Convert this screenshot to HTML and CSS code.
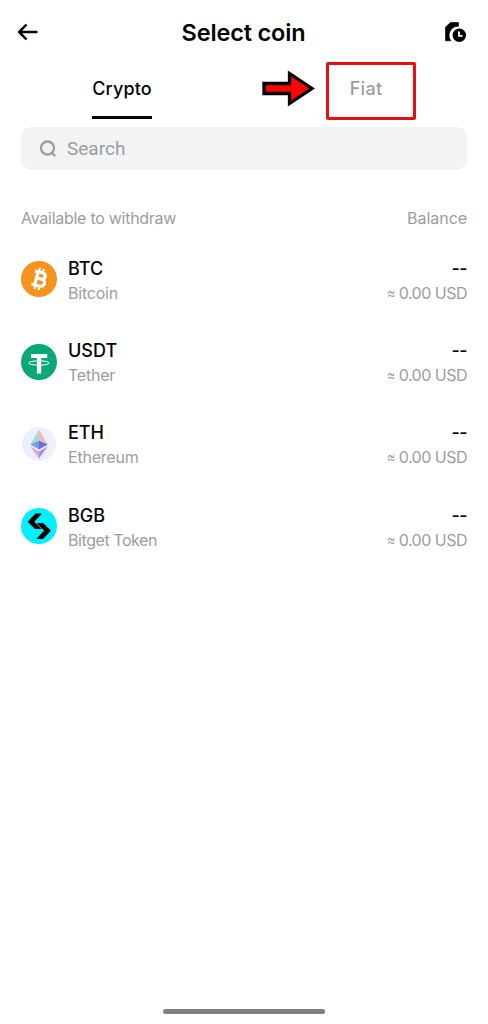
FILE: index.html
```html
<!DOCTYPE html>
<html lang="en">
<head>
<meta charset="utf-8">
<title>Select coin</title>
<link rel="stylesheet" href="styles.css">
</head>
<body>
<main class="screen">
  <header class="topbar">
    <svg class="back" width="22" height="20" viewBox="0 0 22 20"><path d="M9.500 2.500 2.200 10 9.500 17.500M2.200 10H20.500" fill="none" stroke="#000" stroke-width="2.500"/></svg>
    <h1 class="title">Select coin</h1>
    <svg class="history" width="24" height="24" viewBox="0 0 24 24"><path d="M6.500 2.500H14.500V6.300A9 9 0 0 0 7 20.800H1.500V7Z" stroke="#000" stroke-width=".6" stroke-linejoin="round"/><circle cx="15.300" cy="15.300" r="6.700"/><path d="M15 11.500v4.300h3.500" fill="none" stroke="#fff" stroke-width="1.800"/></svg>
  </header>
  <nav class="tabs">
    <div class="tab"><span class="tab-label active">Crypto</span></div>
    <div class="tab"><span class="tab-label fiat">Fiat</span>
      <svg class="pointer" width="56" height="40" viewBox="0 0 56 40"><path d="M4 15.500H29.500V5.500L52 20.500 29.500 35.500V25.500H4Z" fill="#f80505" stroke="#000" stroke-width="3.300"/></svg>
      <div class="highlight"></div>
    </div>
  </nav>
  <div class="search">
    <svg width="18" height="18" viewBox="0 0 18 18"><circle cx="8.500" cy="8" r="6.500" fill="none" stroke="#9b9da1" stroke-width="2.300"/><path d="m12.500 12.200 3.800 4" stroke="#9b9da1" stroke-width="2.300"/></svg>
    <span class="search-text">Search</span>
  </div>
  <div class="columns"><span class="available">Available to withdraw</span><span class="balance">Balance</span></div>
  <section class="coins">
    <div class="coin">
      <svg class="logo" viewBox="0 0 36 36"><circle cx="18" cy="18" r="18" fill="#f7931a"/><g transform="rotate(14 18 18)" fill="none" stroke="#fff"><path d="M12 11.200H19.500C24.800 11.200 24.800 17.500 19.500 17.500H15M19.800 17.500C26 17.500 26 24.800 19.800 24.800H12M15.300 11.200V24.800" stroke-width="3.200"/><path d="M16.200 7.200V11M20.200 7.200V11M16.200 25V28.800M20.200 25V28.800" stroke-width="2.200"/></g></svg>
      <div class="name"><b class="btc">BTC</b><span class="bitcoin">Bitcoin</span></div><div class="amount"><b>--</b><span><i>≈</i> 0.00 USD</span></div>
    </div>
    <div class="coin">
      <svg class="logo" viewBox="0 0 36 36"><circle cx="18" cy="18" r="18" fill="#0aa77b"/><path d="M10 10H26.200V13.900H20.200V29.500H15.900V13.900H10Z" fill="#fff"/><ellipse cx="18" cy="19" rx="10.300" ry="2.200" fill="none" stroke="#fff" stroke-width="1"/></svg>
      <div class="name"><b class="usdt">USDT</b><span class="tether">Tether</span></div><div class="amount"><b>--</b><span><i>≈</i> 0.00 USD</span></div>
    </div>
    <div class="coin">
      <svg class="logo" viewBox="0 0 36 36"><circle cx="18" cy="18" r="17" fill="#ecf0fa"/><path d="M18 3.500V14.500L9.300 18.500Z" fill="#a5dcda"/><path d="M18 3.500V14.500L26.700 18.500Z" fill="#f3b9b4"/><path d="M9.300 18.500 18 14.500V23.500Z" fill="#7b9cea"/><path d="M26.700 18.500 18 14.500V23.500Z" fill="#6872cf"/><path d="M9.300 20.500 18 25.500V32.500Z" fill="#dca9d3"/><path d="M26.700 20.500 18 25.500V32.500Z" fill="#aa8bea"/></svg>
      <div class="name"><b class="eth">ETH</b><span class="ethereum">Ethereum</span></div><div class="amount"><b>--</b><span><i>≈</i> 0.00 USD</span></div>
    </div>
    <div class="coin">
      <svg class="logo" viewBox="0 0 36 36"><circle cx="18" cy="18" r="18" fill="#00f0ff"/><path d="M14.500 5.500H21L13.300 13.700 20.600 21H14L6.700 13.700Z"/><path d="M15.400 15.100H22L30 22.700 22 31H15.200L23.100 22.700Z"/></svg>
      <div class="name"><b class="bgb">BGB</b><span class="bitget">Bitget Token</span></div><div class="amount"><b>--</b><span><i>≈</i> 0.00 USD</span></div>
    </div>
  </section>
  <div class="home-bar"></div>
</main>
</body>
</html>
```
FILE: styles.css
```css
* { box-sizing: border-box; }
body { margin: 0; background: #fff; color: #050505; font-family: Inter, "Liberation Sans", sans-serif; }
.screen { height: 1024px; display: flex; flex-direction: column; padding: 0 21px; white-space: nowrap; }
.topbar { height: 64px; display: flex; align-items: center; justify-content: space-between; margin: 0 -1px 0 -4px; }
.back { display: block; }
.title { margin: 0; padding: 1px 0 0 4px; font-size: 23.5px; line-height: 28px; font-weight: 600; letter-spacing: -.17px; }
.history { display: block; }
.tabs { height: 63px; display: flex; margin: 0 -21px; }
.tab { flex: 1; display: flex; justify-content: center; position: relative; }
.tab-label { height: 55px; padding-top: 13px; font-size: 18px; line-height: 24px; font-weight: 450; color: #9b9da1; }
.fiat { letter-spacing: .3px; }
.active { color: #050505; border-bottom: 3px solid #050505; letter-spacing: .1px; }
.pointer { position: absolute; left: 16px; top: 4px; }
.highlight { position: absolute; left: 82px; top: -2px; width: 90px; height: 58px; border: 3px solid #e60f12; border-radius: 2px; }
.search { height: 43px; border-radius: 10px; background: #f1f3f5; display: flex; align-items: center; padding-left: 18px; gap: 10px; color: #9b9da1; }
.search-text { font: 19px/24px Roboto, sans-serif; }
.columns { height: 68px; margin-top: 36px; padding-top: 2px; display: flex; justify-content: space-between; font-size: 16px; line-height: 20px; color: #9b9da1; }
.available { letter-spacing: -.27px; }
.balance { letter-spacing: -.05px; }
.coins { margin-top: -36px; }
.coin { height: 82.4px; display: flex; align-items: center; gap: 11px; }
.logo { width: 36px; height: 36px; display: block; flex: none; }
.name, .amount { display: flex; flex-direction: column; gap: 2px; padding-top: 3px; }
.amount { margin-left: auto; align-items: flex-end; }
.coin b { font-size: 18px; line-height: 22px; font-weight: 500; }
.coin span { font-size: 16px; line-height: 22px; color: #9b9da1; }
.coin .bitcoin, .coin .tether, .coin .ethereum { letter-spacing: -.22px; }
.coin .bitget { letter-spacing: -.43px; }
.amount b { letter-spacing: -.6px; }
.coin .amount span { letter-spacing: -.5px; }
.amount i { font-style: normal; font-size: 12.500px; line-height: 12px; vertical-align: 1px; }
.home-bar { width: 162px; height: 5px; border-radius: 3px; background: #808080; margin: auto auto 10px; }
```
